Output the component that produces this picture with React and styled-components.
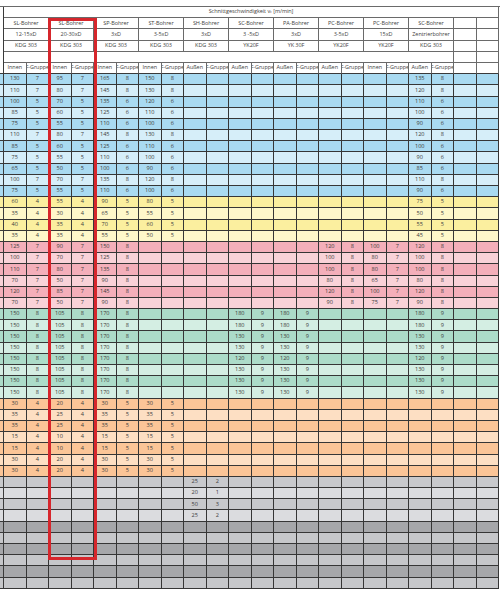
import React from 'react';
import styled, { createGlobalStyle } from 'styled-components';

const Global = createGlobalStyle`
  html, body { margin: 0; padding: 0; background: #fff; }
  body { font-family: "Open Sans", "Liberation Sans", sans-serif; }
`;

const ROW = 11.2;

const TONES = {
  blue: ['#a9daf1', '#d6eef9'],
  yellow: ['#fbef9f', '#fef7ca'],
  red: ['#f4afba', '#f9d2d8'],
  green: ['#acdcc9', '#d4eee3'],
  orange: ['#fbc597', '#fddfc3'],
  grayLight: ['#c8c9cc', '#dbdcdf'],
  grayDark: ['#a6a7aa', '#c6c7ca'],
};

const Page = styled.div`
  position: relative;
  width: 500px;
  height: 591px;
  padding-top: 6px;
  box-sizing: border-box;
  overflow: hidden;
  background: #fff;
`;

const Grid = styled.div`
  display: grid;
  grid-template-columns: 4px repeat(22, 22.5px);
  grid-auto-rows: ${ROW}px;
  border-top: 1px solid #6a6a6a;
`;

const Sliver = styled.div`
  box-sizing: border-box;
  background: ${(p) => p.$bg || '#fff'};
  border-right: 1px solid #3a3a3a;
  border-bottom: ${(p) => (p.$bottom ? '1px solid #3a3a3a' : 'none')};
`;

const HeadCell = styled.div`
  grid-column: span ${(p) => p.$span || 1};
  box-sizing: border-box;
  border-right: 1px solid #6a6a6a;
  border-bottom: 1px solid ${(p) => (p.$dark ? '#3a3a3a' : '#6a6a6a')};
  background: #fff;
  display: flex;
  align-items: center;
  justify-content: center;
  overflow: hidden;
  white-space: nowrap;
  font-size: 5.5px;
  line-height: 1;
  color: #3f3f3f;
  letter-spacing: -0.05px;
  sub { font-size: 3.6px; vertical-align: -1px; }
`;

const DataCell = styled.div`
  box-sizing: border-box;
  border-right: 1px solid #363636;
  border-bottom: 1px solid #363636;
  background: ${(p) => p.$bg};
  display: flex;
  align-items: center;
  justify-content: center;
  overflow: hidden;
  white-space: nowrap;
  font-size: 5.6px;
  line-height: 1;
  color: #404040;
`;

const Highlight = styled.div`
  position: absolute;
  left: 48px;
  top: 18px;
  width: 49px;
  height: 542px;
  box-sizing: border-box;
  border: 3px solid #d6262c;
  pointer-events: none;
`;

const groups = [
  ['SL-Bohrer', '12-15xD', 'KDG 303'],
  ['SL-Bohrer', '20-30xD', 'KDG 303'],
  ['SP-Bohrer', '3xD', 'KDG 303'],
  ['ST-Bohrer', '3-5xD', 'KDG 303'],
  ['SH-Bohrer', '3xD', 'KDG 303'],
  ['SC-Bohrer', '3 -5xD', 'YK20F'],
  ['PA-Bohrer', '3xD', 'YK 30F'],
  ['PC-Bohrer', '3-5xD', 'YK20F'],
  ['PC-Bohrer', '15xD', 'YK20F'],
  ['SC-Bohrer', 'Zentrierbohrer', 'KDG 303'],
];

const subLabels = [
  'Innen', 'F-Gruppe', 'Innen', 'F-Gruppe', 'Innen', 'F-Gruppe', 'Innen', 'F-Gruppe',
  'Außen', 'F-Gruppe', 'Außen', 'F-Gruppe', 'Außen', 'F-Gruppe', 'Außen', 'F-Gruppe',
  'Innen', 'F-Gruppe', 'Außen', 'F-Gruppe',
];

const build = (segments) => {
  const arr = Array(22).fill('');
  segments.forEach(([start, ...vals]) => {
    vals.forEach((v, i) => {
      arr[start + i] = String(v);
    });
  });
  return arr;
};

const B = (a, b, c, d, e, f, g, h, z1, z2) => build([[0, a, b, c, d, e, f, g, h], [18, z1, z2]]);
const R = (a, b, c, d, e, f, p1, p2, q1, q2, z1, z2) => build([[0, a, b, c, d, e, f], [14, p1, p2, q1, q2, z1, z2]]);
const G = (a, b, c, d, e, f, s1, s2, t1, t2, z1, z2) => build([[0, a, b, c, d, e, f], [10, s1, s2, t1, t2], [18, z1, z2]]);
const O = (a, b, c, d, e, f, g, h) => build([[0, a, b, c, d, e, f, g, h]]);

const sections = [
  {
    tone: 'blue',
    rows: [
      B(130, 7, 95, 7, 165, 8, 150, 8, 135, 8),
      B(110, 7, 80, 7, 145, 8, 130, 8, 120, 8),
      B(100, 5, 70, 5, 135, 6, 120, 6, 110, 6),
      B(85, 5, 60, 5, 125, 6, 110, 6, 100, 6),
      B(75, 5, 55, 5, 110, 6, 100, 6, 90, 6),
      B(110, 7, 80, 7, 145, 8, 130, 8, 120, 8),
      B(85, 5, 60, 5, 125, 6, 110, 6, 100, 6),
      B(75, 5, 55, 5, 110, 6, 100, 6, 90, 6),
      B(65, 5, 50, 5, 100, 6, 90, 6, 85, 6),
      B(100, 7, 70, 7, 135, 8, 120, 8, 110, 8),
      B(75, 5, 55, 5, 110, 6, 100, 6, 90, 6),
    ],
  },
  {
    tone: 'yellow',
    rows: [
      B(60, 4, 55, 4, 90, 5, 80, 5, 75, 5),
      B(35, 4, 30, 4, 65, 5, 55, 5, 50, 5),
      B(40, 4, 35, 4, 70, 5, 60, 5, 55, 5),
      B(35, 4, 35, 4, 55, 5, 50, 5, 45, 5),
    ],
  },
  {
    tone: 'red',
    rows: [
      R(125, 7, 90, 7, 150, 8, 120, 8, 100, 7, 120, 8),
      R(100, 7, 70, 7, 125, 8, 100, 8, 80, 7, 100, 8),
      R(110, 7, 80, 7, 135, 8, 100, 8, 80, 7, 100, 8),
      R(70, 7, 50, 7, 90, 8, 80, 8, 65, 7, 80, 8),
      R(120, 7, 85, 7, 145, 8, 120, 8, 100, 7, 120, 8),
      R(70, 7, 50, 7, 90, 8, 90, 8, 75, 7, 90, 8),
    ],
  },
  {
    tone: 'green',
    rows: [
      G(150, 8, 105, 8, 170, 8, 180, 9, 180, 9, 180, 9),
      G(150, 8, 105, 8, 170, 8, 180, 9, 180, 9, 180, 9),
      G(150, 8, 105, 8, 170, 8, 130, 9, 130, 9, 130, 9),
      G(150, 8, 105, 8, 170, 8, 130, 9, 130, 9, 130, 9),
      G(150, 8, 105, 8, 170, 8, 120, 9, 120, 9, 120, 9),
      G(150, 8, 105, 8, 170, 8, 130, 9, 130, 9, 130, 9),
      G(150, 8, 105, 8, 170, 8, 130, 9, 130, 9, 130, 9),
      G(150, 8, 105, 8, 170, 8, 130, 9, 130, 9, 130, 9),
    ],
  },
  {
    tone: 'orange',
    rows: [
      O(30, 4, 20, 4, 30, 5, 30, 5),
      O(35, 4, 25, 4, 35, 5, 35, 5),
      O(35, 4, 25, 4, 35, 5, 35, 5),
      O(15, 4, 10, 4, 15, 5, 15, 5),
      O(15, 4, 10, 4, 15, 5, 15, 5),
      O(30, 4, 20, 4, 30, 5, 30, 5),
      O(30, 4, 20, 4, 30, 5, 30, 5),
    ],
  },
  {
    tone: 'grayLight',
    rows: [
      build([[8, 25, 2]]),
      build([[8, 20, 1]]),
      build([[8, 50, 3]]),
      build([[8, 25, 2]]),
    ],
  },
  {
    tone: 'grayDark',
    rows: Array.from({ length: 6 }, () => build([])),
  },
];

function Header() {
  return (
    <>
      <Sliver />
      <HeadCell $span={22}>
        Schnittgeschwindigkeit v<sub>c</sub>&nbsp;[m/min]
      </HeadCell>
      {[0, 1, 2].map((level) => (
        <React.Fragment key={level}>
          <Sliver />
          {groups.map((g, i) => (
            <HeadCell key={i} $span={2}>{g[level]}</HeadCell>
          ))}
          <HeadCell />
          <HeadCell />
        </React.Fragment>
      ))}
      <Sliver />
      <HeadCell $span={20} />
      <HeadCell />
      <HeadCell />
      <Sliver $bottom />
      {subLabels.map((l, i) => (
        <HeadCell key={i} $dark>{l}</HeadCell>
      ))}
      <HeadCell $dark />
      <HeadCell $dark />
    </>
  );
}

function Body() {
  return sections.map((sec) =>
    sec.rows.map((cells, ri) => {
      const bg = TONES[sec.tone][ri % 2];
      return (
        <React.Fragment key={sec.tone + ri}>
          <Sliver $bg={bg} $bottom />
          {cells.map((v, ci) => (
            <DataCell key={ci} $bg={bg}>{v}</DataCell>
          ))}
        </React.Fragment>
      );
    })
  );
}

export default function App() {
  return (
    <>
      <Global />
      <Page>
        <Grid>
          <Header />
          <Body />
        </Grid>
        <Highlight />
      </Page>
    </>
  );
}
